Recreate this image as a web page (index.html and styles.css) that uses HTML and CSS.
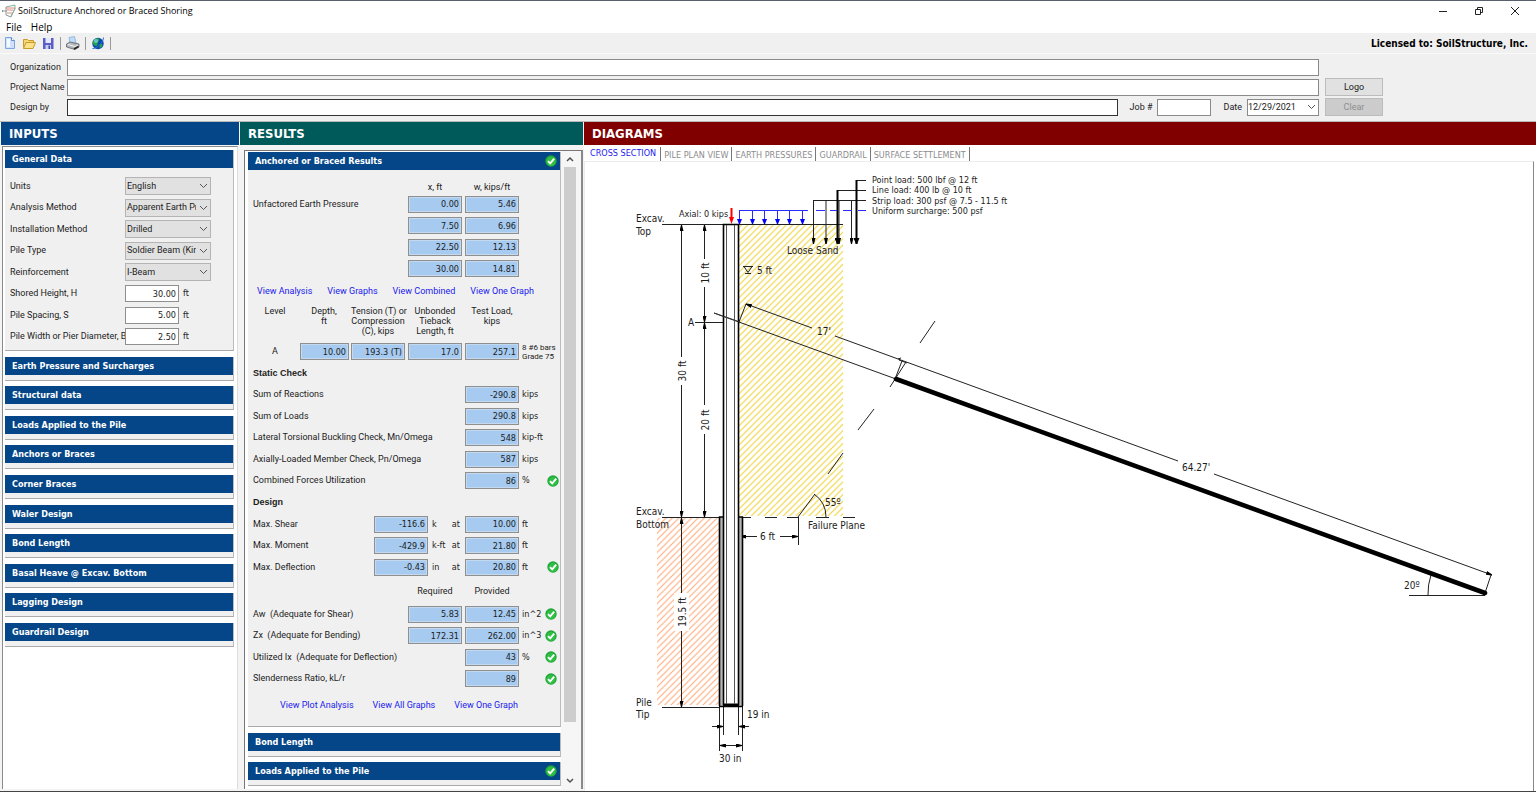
FILE: index.html
```html
<!DOCTYPE html>
<html lang="en">
<head>
<meta charset="utf-8">
<title>SoilStructure Anchored or Braced Shoring</title>
<link rel="stylesheet" href="styles.css">
</head>
<body>
<svg class="defs" width="0" height="0" aria-hidden="true">
  <symbol id="ok" viewBox="0 0 12 12"><circle cx="6" cy="6" r="5.7" fill="#22a53a"/><circle cx="6" cy="6.4" r="4.6" fill="#2fbf45"/><path d="M3 6.2 5.2 8.4 9.2 3.6" fill="none" stroke="#fff" stroke-width="1.9"/></symbol>
</svg>
<div class="window">
  <header class="titlebar">
    <svg class="app-icon" viewBox="0 0 14 14"><path d="M0 7h5M1 6 0 7l1 1M4 3v8l5 2 4-9" fill="none" stroke="#8a9a94"/><path d="M4 3 13 1v4L9 12" fill="none" stroke="#7fb59a"/><path d="M4 4h9M5 6h6M5 9h5" stroke="#e08a80" fill="none"/></svg>
    <span class="title">SoilStructure Anchored or Braced Shoring</span>
    <div class="winbtns">
      <button aria-label="Minimize"><svg viewBox="0 0 10 10"><path d="M1 5.5h8" stroke="#222" fill="none"/></svg></button>
      <button aria-label="Restore"><svg viewBox="0 0 10 10"><path d="M1.5 3.5h5v5h-5zM3.5 3V1.500h5v5H7" stroke="#222" fill="none"/></svg></button>
      <button aria-label="Close"><svg viewBox="0 0 10 10"><path d="M1 1l8 8M9 1 1 9" stroke="#222" fill="none"/></svg></button>
    </div>
  </header>
  <nav class="menubar"><button>File</button><button>Help</button></nav>
  <div class="toolbar">
    <button aria-label="New"><svg viewBox="0 0 14 14"><path d="M2.500 1.500h6l3 3v8h-9z" fill="#cfe2fa" stroke="#7fa6dc"/><path d="M4 3h3v8H4z" fill="#f4f9ff"/><path d="M8.500 1.500v3h3" fill="#fff" stroke="#5f8bcf"/></svg></button>
    <button aria-label="Open"><svg viewBox="0 0 14 14"><path d="M1.500 11.500v-8h4l1 1h5v2" fill="#f3d774" stroke="#c79a2a"/><path d="M1.500 12.500 4 6.500h9.500l-2.500 6z" fill="#fbe28a" stroke="#c79a2a"/></svg></button>
    <button aria-label="Save"><svg viewBox="0 0 14 14"><path d="M2 2h10.500v11H2z" fill="#5a5ec8"/><path d="M4.500 2h5.500v5H4.500z" fill="#e6e9fb"/><path d="M4.500 9h5.500v4H4.500z" fill="#c8ccf0"/><path d="M7.500 9.500H9V13H7.500z" fill="#3f43a0"/></svg></button>
    <i class="sep"></i>
    <button aria-label="Print"><svg viewBox="0 0 14 14"><path d="M4 7 3 1.500 8.500.5 10 7z" fill="#bcdcfb" stroke="#8aa5c4" stroke-width=".7"/><path d="M.5 8 4 6l9 2v3l-4 2.500L.5 11z" fill="#b4b7bb" stroke="#5d6167" stroke-width=".8"/><path d="M2 8.500l7 2 3-1.500" fill="none" stroke="#f4f4f4"/><path d="M8 13l4.500-2.500" stroke="#222" stroke-width="1.500"/></svg></button>
    <i class="sep"></i>
    <button aria-label="Web"><svg viewBox="0 0 14 14"><circle cx="7" cy="7.500" r="5.700" fill="#0e49b0"/><path d="M4 3c2.500-1.500 5-.5 4 1.500S6 7 6.500 8.500 4 10.500 2.500 8.500 2 5 4 3zM9 8c2-.5 3 .5 2 2.500s-2.500 1.500-2.500.2z" fill="#25a844"/><circle cx="5" cy="5" r="2" fill="#7fd6f2" opacity=".7"/><path d="M1.500 12.500C5 13 12.500 7 12.500 1.500" stroke="#2a6fd0" stroke-width="1" fill="none"/></svg></button>
    <i class="sep"></i>
    <strong class="license">Licensed to: SoilStructure, Inc.</strong>
  </div>
  <form class="project">
    <label for="org">Organization</label><input id="org" class="box">
    <label for="pname" class="c1">Project Name</label><input id="pname" class="box"><button type="button" class="btn">Logo</button>
    <label for="by" class="c1">Design by</label>
    <div class="line">
      <input id="by" class="box focus">
      <label for="job">Job #</label><input id="job" class="box job">
      <label for="date">Date</label><select id="date" class="box date"><option>12/29/2021</option></select>
    </div>
    <button type="button" class="btn off" disabled>Clear</button>
  </form>
  <main class="columns">
    <section class="col inputs">
      <h1 class="head blue">INPUTS</h1>
      <div class="pane">
        <div class="card">
          <h2>General Data</h2>
          <div class="general">
            <div class="field"><label for="u">Units</label><select id="u"><option>English</option></select></div>
            <div class="field"><label for="am">Analysis Method</label><select id="am"><option>Apparent Earth Pressure</option></select></div>
            <div class="field"><label for="im">Installation Method</label><select id="im"><option>Drilled</option></select></div>
            <div class="field"><label for="pt">Pile Type</label><select id="pt"><option>Soldier Beam (King Pile)</option></select></div>
            <div class="field"><label for="rf">Reinforcement</label><select id="rf"><option>I-Beam</option></select></div>
            <div class="field"><label for="sh">Shored Height, H</label><input id="sh" class="num" value="30.00"><span>ft</span></div>
            <div class="field"><label for="ps">Pile Spacing, S</label><input id="ps" class="num" value="5.00"><span>ft</span></div>
            <div class="field"><label for="pw">Pile Width or Pier Diameter, B</label><input id="pw" class="num" value="2.50"><span>ft</span></div>
          </div>
        </div>
        <div class="card shut"><h2>Earth Pressure and Surcharges</h2></div>
        <div class="card shut"><h2>Structural data</h2></div>
        <div class="card shut"><h2>Loads Applied to the Pile</h2></div>
        <div class="card shut"><h2>Anchors or Braces</h2></div>
        <div class="card shut"><h2>Corner Braces</h2></div>
        <div class="card shut"><h2>Waler Design</h2></div>
        <div class="card shut"><h2>Bond Length</h2></div>
        <div class="card shut"><h2>Basal Heave @ Excav. Bottom</h2></div>
        <div class="card shut"><h2>Lagging Design</h2></div>
        <div class="card shut"><h2>Guardrail Design</h2></div>
      </div>
    </section>

    <section class="col results">
      <h1 class="head green">RESULTS</h1>
      <div class="pane">
        <div class="list">
          <div class="card">
            <h2>Anchored or Braced Results<svg class="ok"><use href="#ok"/></svg></h2>
            <div class="body">
              <table class="pressure">
                <tr class="cap"><td></td><th>x, ft</th><th>w, kips/ft</th></tr>
                <tr><th class="name">Unfactored Earth Pressure</th><td><input class="val" readonly aria-label="x 1" value="0.00"></td><td><input class="val" readonly aria-label="w 1" value="5.46"></td></tr>
                <tr><th></th><td><input class="val" readonly aria-label="x 2" value="7.50"></td><td><input class="val" readonly aria-label="w 2" value="6.96"></td></tr>
                <tr><th></th><td><input class="val" readonly aria-label="x 3" value="22.50"></td><td><input class="val" readonly aria-label="w 3" value="12.13"></td></tr>
                <tr><th></th><td><input class="val" readonly aria-label="x 4" value="30.00"></td><td><input class="val" readonly aria-label="w 4" value="14.81"></td></tr>
              </table>
              <div class="links"><a href="#">View Analysis</a><a href="#">View Graphs</a><a href="#">View Combined</a><a href="#">View One Graph</a></div>
              <table class="ties">
                <tr><th>Level</th><th>Depth,<br>ft</th><th>Tension (T) or<br>Compression<br>(C), kips</th><th>Unbonded<br>Tieback<br>Length, ft</th><th>Test Load,<br>kips</th><td></td></tr>
                <tr class="vals"><td>A</td><td><input class="val" readonly aria-label="Depth" value="10.00"></td><td><input class="val" readonly aria-label="Tension" value="193.3 (T)"></td><td><input class="val" readonly aria-label="Unbonded length" value="17.0"></td><td><input class="val" readonly aria-label="Test load" value="257.1"></td><td class="note">8 #6 bars<br>Grade 75</td></tr>
              </table>
              <h3>Static Check</h3>
              <div class="row"><label for="r1">Sum of Reactions</label><input id="r1" class="val" readonly value="-290.8"><span class="tail">kips</span></div>
              <div class="row"><label for="r2">Sum of Loads</label><input id="r2" class="val" readonly value="290.8"><span class="tail">kips</span></div>
              <div class="row"><label for="r3">Lateral Torsional Buckling Check, Mn/Omega</label><input id="r3" class="val" readonly value="548"><span class="tail">kip-ft</span></div>
              <div class="row"><label for="r4">Axially-Loaded Member Check, Pn/Omega</label><input id="r4" class="val" readonly value="587"><span class="tail">kips</span></div>
              <div class="row"><label for="r5">Combined Forces Utilization</label><input id="r5" class="val" readonly value="86"><span class="tail far">%<svg class="ok"><use href="#ok"/></svg></span></div>
              <h3>Design</h3>
              <div class="row"><label for="d1">Max. Shear</label><input id="d1" class="val" readonly value="-116.6"><span class="mid"><span>k</span><span>at</span></span><input class="val" readonly aria-label="Shear depth" value="10.00"><span class="tail">ft</span></div>
              <div class="row"><label for="d2">Max. Moment</label><input id="d2" class="val" readonly value="-429.9"><span class="mid"><span>k-ft</span><span>at</span></span><input class="val" readonly aria-label="Moment depth" value="21.80"><span class="tail">ft</span></div>
              <div class="row"><label for="d3">Max. Deflection</label><input id="d3" class="val" readonly value="-0.43"><span class="mid"><span>in</span><span>at</span></span><input class="val" readonly aria-label="Deflection depth" value="20.80"><span class="tail far">ft<svg class="ok"><use href="#ok"/></svg></span></div>
              <div class="row reqhead"><span class="fill"></span><span class="cell">Required</span><i class="gap"></i><span class="cell">Provided</span><span class="tail"></span></div>
              <div class="row"><label for="q1">Aw&nbsp; (Adequate for Shear)</label><input id="q1" class="val" readonly value="5.83"><i class="gap"></i><input class="val" readonly aria-label="Aw provided" value="12.45"><span class="tail">in^2<svg class="ok"><use href="#ok"/></svg></span></div>
              <div class="row"><label for="q2">Zx&nbsp; (Adequate for Bending)</label><input id="q2" class="val" readonly value="172.31"><i class="gap"></i><input class="val" readonly aria-label="Zx provided" value="262.00"><span class="tail">in^3<svg class="ok"><use href="#ok"/></svg></span></div>
              <div class="row"><label for="q3">Utilized Ix&nbsp; (Adequate for Deflection)</label><input id="q3" class="val" readonly value="43"><span class="tail">%<svg class="ok"><use href="#ok"/></svg></span></div>
              <div class="row"><label for="q4">Slenderness Ratio, kL/r</label><input id="q4" class="val" readonly value="89"><span class="tail"><svg class="ok"><use href="#ok"/></svg></span></div>
              <div class="links last"><a href="#">View Plot Analysis</a><a href="#">View All Graphs</a><a href="#">View One Graph</a></div>
            </div>
          </div>
          <div class="card shut"><h2>Bond Length</h2></div>
          <div class="card shut"><h2>Loads Applied to the Pile<svg class="ok"><use href="#ok"/></svg></h2></div>
        </div>
        <div class="scroll" aria-hidden="true">
          <svg viewBox="0 0 12 14"><path d="M3 9l3-3 3 3" fill="none" stroke="#505050" stroke-width="1.500"/></svg>
          <div class="thumb"></div>
          <svg viewBox="0 0 12 14"><path d="M3 5l3 3 3-3" fill="none" stroke="#505050" stroke-width="1.500"/></svg>
        </div>
      </div>
    </section>

    <section class="col diagrams">
      <h1 class="head red">DIAGRAMS</h1>
      <div class="tabs"><button class="on">CROSS SECTION</button><button>PILE PLAN VIEW</button><button>EARTH PRESSURES</button><button>GUARDRAIL</button><button>SURFACE SETTLEMENT</button></div>
      <div class="canvas">
        <svg class="drawing" viewBox="585 162 948 626">
          <defs>
            <pattern id="sand" width="6.400" height="6.400" patternUnits="userSpaceOnUse"><path d="M-1 7.400 7.400-1M-1 1 1-1M5.400 7.400l2-2" stroke="#efd235" stroke-width="1.100"/></pattern>
            <pattern id="clay" width="6.400" height="6.400" patternUnits="userSpaceOnUse"><path d="M-1 7.400 7.400-1M-1 1 1-1M5.400 7.400l2-2" stroke="#ffa573" stroke-width="1"/></pattern>
            <marker id="ar" viewBox="0 0 6 4" refX="6" refY="2" markerWidth="6" markerHeight="4" markerUnits="userSpaceOnUse" orient="auto-start-reverse"><path d="M0 0 6 1.500v1L0 4z"/></marker>
            <marker id="bl" viewBox="0 0 5 5" refX="5" refY="2.500" markerWidth="5" markerHeight="5" markerUnits="userSpaceOnUse" orient="auto"><path d="M0 0 5 2v1L0 5z" fill="#00f"/></marker>
            <marker id="ld" viewBox="0 0 6 6" refX="6" refY="3" markerWidth="6" markerHeight="6" markerUnits="userSpaceOnUse" orient="auto"><path d="M0 0 6 2.500v1L0 6z"/></marker>
          </defs>
          <rect x="739" y="225" width="104" height="291" fill="url(#sand)"/>
          <rect x="657" y="518" width="62" height="187" fill="url(#clay)"/>
          <rect x="674" y="593" width="15" height="38" fill="#fff"/>
          <g class="ln">
            <path d="M662 224.500H843M662 517.500h57M662 707.500h58M695 322.500h28"/>
            <path d="M743 517.500h8M765 517.500h12M787 517.500h11M816 517.500h13M843 517.500h12M798.500 517v28"/>
            <path d="M719.500 707v44M742.500 707v44M723.500 707v28M738.500 707v28"/>
            <path d="M798 517 815 494M828 474 843 453M858 430 874 409M890 387 906 362M920 343 935 321"/>
            <path d="M798 517m28 0A28 28 0 0 0 814 494M1428 595A57 57 0 0 1 1431 575M1409 595.500h76"/>
            <path d="M714 313 896 379M739 322 746 304M895 379 902 361M899 360l8 3M898 359l3-1M1485 593 1491 575"/>
            <path d="M743 266.500h10M744 266.500l4 6 4-6M745 273.500h6"/>
          </g>
          <g class="ln">
            <path marker-start="url(#ar)" d="M681.500 225V357"/><path marker-end="url(#ar)" d="M681.500 385V517"/>
            <path marker-start="url(#ar)" d="M704.500 225V259"/><path marker-end="url(#ar)" d="M704.500 287V322"/>
            <path marker-start="url(#ar)" d="M704.500 323V405"/><path marker-end="url(#ar)" d="M704.500 434V517"/>
            <path marker-start="url(#ar)" d="M681.500 518V593"/><path marker-end="url(#ar)" d="M681.500 631V707"/>
            <path marker-start="url(#ar)" d="M740 536.500h17"/><path marker-end="url(#ar)" d="M780 536.500h18"/>
            <path marker-end="url(#ar)" d="M712 726.500h11"/><path marker-end="url(#ar)" d="M749 726.500h-10"/>
            <path marker-start="url(#ar)" marker-end="url(#ar)" d="M720 745.500h22"/>
            <path marker-start="url(#ar)" d="M746 304 812 328"/><path d="M835 336 1178 461"/><path marker-end="url(#ar)" d="M1214 474 1492 575"/>
          </g>
          <path d="M896 379 1485 593" stroke="#000" stroke-width="4.600" stroke-linecap="round"/>
          <g fill="#b5b5b5"><path d="M719 517h5v189h-5zM738 517h5v189h-5z"/></g>
          <g fill="none" stroke="#000" stroke-width="1.600"><path d="M723.500 705V224.500h15V705M719.500 516.500V706M742.500 516.500V706M719 517h5M738 517h5M719 706.500h24"/></g>
          <path d="M723 705h16" stroke="#000" stroke-width="3"/>
          <path d="M726.500 225V704M734.500 225V704" stroke="#555"/>
          <path d="M714 313 740 322" stroke="#333" stroke-width=".9"/>
          <g class="ln">
            <path d="M866 180.500H856M866 190.500H837M866 200.500H813"/>
            <path marker-end="url(#ar)" d="M813.500 200V244"/><path marker-end="url(#ar)" d="M826 200V244"/><path marker-end="url(#ar)" d="M839 200V244"/><path marker-end="url(#ar)" d="M851.500 200V244"/>
            <path marker-end="url(#ld)" class="bold" d="M837.500 190V244"/><path marker-end="url(#ld)" class="bold" d="M856.500 180V244"/>
          </g>
          <g stroke="#2b2bff" fill="none"><path d="M739 210.500h69M816 210.500h9M830 210.500h7M843 210.500h9M858 210.500h8"/><path marker-end="url(#bl)" d="M739.500 210v14"/><path marker-end="url(#bl)" d="M752.500 210v14"/><path marker-end="url(#bl)" d="M764.500 210v14"/><path marker-end="url(#bl)" d="M777.500 210v14"/><path marker-end="url(#bl)" d="M789.500 210v14"/><path marker-end="url(#bl)" d="M802.500 210v14"/></g>
          <path d="M731.500 208v10" stroke="#f00" stroke-width="2"/><path d="M729 217h5l-2.500 7z" fill="#f00"/>
          <g class="t9"><text x="872" y="183">Point load: 500 lbf @ 12 ft</text><text x="872" y="193">Line load: 400 lb @ 10 ft</text><text x="872" y="204">Strip load: 300 psf @ 7.5 - 11.5 ft</text><text x="872" y="214">Uniform surcharge: 500 psf</text><text x="679" y="217">Axial: 0 kips</text></g>
          <g class="t10">
            <text x="636" y="222">Excav.</text><text x="636" y="235">Top</text><text x="787" y="254">Loose Sand</text><text x="757" y="274">5 ft</text>
            <text x="688" y="326">A</text><text x="817" y="335">17'</text><text x="1182" y="471">64.27'</text><text x="1404" y="589">20º</text><text x="825" y="506">55º</text>
            <text x="636" y="515">Excav.</text><text x="636" y="528">Bottom</text><text x="808" y="529">Failure Plane</text><text x="760" y="540">6 ft</text>
            <text x="636" y="706">Pile</text><text x="636" y="718">Tip</text><text x="747" y="718">19 in</text><text x="719" y="762">30 in</text>
            <g text-anchor="middle"><text transform="translate(686 371) rotate(-90)">30 ft</text><text transform="translate(709 273) rotate(-90)">10 ft</text><text transform="translate(709 420) rotate(-90)">20 ft</text><text transform="translate(686 612) rotate(-90)">19.5 ft</text></g>
          </g>
        </svg>
      </div>
    </section>
  </main>
</div>
</body>
</html>
```
FILE: styles.css
```css
* { box-sizing: border-box; }
html, body { height: 100%; }
body { margin: 0; background: #fff; color: #1c1c1c; font: 9px/11px Roboto, "Liberation Sans", sans-serif; }
.defs { position: absolute; }
button, input, select { font: inherit; color: inherit; margin: 0; }
button { background: none; border: 0; padding: 0; }
h1, h2, h3 { margin: 0; }

.window { min-height: 100vh; display: flex; flex-direction: column; border-top: 1px solid #5b5e6b; border-bottom: 1px solid #444; }
.titlebar { display: flex; align-items: center; height: 19px; padding-left: 2px; background: #fff; }
.app-icon { width: 14px; height: 14px; }
.title { flex: 1; margin-left: 2px; font: 9px/12px "Open Sans", sans-serif; color: #000; }
.winbtns { display: flex; padding-right: 3px; }
.winbtns button { width: 36px; height: 18px; display: grid; place-items: center; }
.winbtns svg { width: 10px; height: 10px; }
.menubar { display: flex; gap: 9px; height: 13px; padding-left: 6px; font: 10px/14px "Open Sans", sans-serif; color: #000; }
.toolbar { display: flex; align-items: center; height: 21px; padding: 0 8px 0 3px; background: #f0f0f0; border-bottom: 1px solid #fafafa; }
.toolbar button { width: 14px; height: 14px; margin-right: 5px; }
.toolbar svg { display: block; width: 14px; height: 14px; }
.sep { width: 1px; height: 13px; margin-right: 5px; background: #9a9a9a; }
.license { margin-left: auto; font: bold 10px/13px "DejaVu Sans Condensed", sans-serif; color: #000; }

.project { display: grid; grid-template-columns: 57px 1fr 58px; grid-auto-rows: 18px; column-gap: 6px; row-gap: 2px; align-items: center; padding: 4px 153px 5px 10px; background: #f0f0f0; border-bottom: 1px solid #b8b8b8; }
.project > label { grid-column: 1; margin-right: -6px; }
.project > .box, .line { margin-left: -6px; }
.box { height: 17px; padding: 0 3px; border: 1px solid #8a8a8a; border-radius: 0; background-color: #fff; min-width: 0; }
.focus { flex: 1; border-color: #333; }
.line { display: flex; align-items: center; gap: 5px; }
.line label { margin-left: 7px; }
.job { width: 54px; }
.date { width: 72px; padding: 0; }
.btn { height: 18px; background: #e1e1e1; border: 1px solid #bcbcbc; text-align: center; }
.off { background: #ccc; color: #8f8f8f; }
select { appearance: none; background: #e1e1e1 url("data:image/svg+xml,%3Csvg xmlns='http://www.w3.org/2000/svg' width='9' height='6'%3E%3Cpath d='M1 1l3.500 3.500L8 1' fill='none' stroke='%23555'/%3E%3C/svg%3E") no-repeat right 2px center; }

.columns { flex: 1; display: grid; grid-template-columns: 239px 343px 1fr; column-gap: 1px; background: #f4f4f4; }
.col { display: flex; flex-direction: column; min-width: 0; }
.head { height: 23px; padding-left: 8px; color: #fff; font: bold 13px/23px "DejaVu Sans Condensed", sans-serif; }
.blue { background: #054688; margin-left: 1px; }
.green { background: #005a5a; }
.red { background: #800000; }
.pane { flex: 1; background: #fff; }
.inputs .pane { margin: 1px 1px 2px 2px; padding: 3px 3px 0 2px; border-left: 1px solid #8a8a8a; border-top: 1px solid #8a8a8a; border-right: 1px solid #ddd; }
.results .pane { display: flex; margin: 5px 0 2px 4px; border-left: 1px solid #777; border-top: 1px solid #777; border-right: 2px solid #8a8a8a; }
.card { background: #f0f0f0; border-right: 1px solid #bbb; border-bottom: 1px solid #aaa; }
.card h2 { display: flex; justify-content: space-between; align-items: center; height: 18px; padding: 0 3px 0 7px; background: #054688; color: #fff; font: bold 9px/18px "DejaVu Sans Condensed", sans-serif; }
.ok { width: 12px; height: 12px; flex: none; }
.shut { height: 24px; margin-top: 6px; }
.shut:nth-child(5n), .shut:nth-child(5n+3) { margin-top: 5px; }
.general { padding: 7px 0 3px 5px; }
.field { display: flex; align-items: center; height: 22px; }
.field:nth-child(even) { height: 21px; }
.field label { width: 115px; white-space: nowrap; }
.field span { margin-left: 4px; }
.field select { width: 86px; height: 18px; padding: 0 14px 0 1px; border: 1px solid #b4b4b4; border-radius: 0; overflow: hidden; }
.num, .val { width: 54px; height: 17px; padding: 0 2px; border: 1px solid #8f8f8f; border-radius: 0; text-align: right; background: #fff; }
.num, .val, .tail, .mid, .field span { font-family: "DejaVu Sans Condensed", sans-serif; }

.list { flex: 1; padding: 1px 0 0 3px; min-width: 0; }
.body { padding: 12px 0 5px 5px; }
.val { display: block; background: #a6caf0; box-shadow: inset 0 0 0 1px #c3d9f0; }
table { border-collapse: collapse; table-layout: fixed; }
th, td { padding: 0; font-weight: normal; white-space: nowrap; }
.pressure { width: 269px; }
.pressure th:nth-child(2), .pressure th:nth-child(3), .pressure td:nth-child(n+2) { width: 57px; }
.pressure .name { text-align: left; }
.pressure tr { height: 22px; }
.pressure tr:nth-child(odd) { height: 21px; }
.pressure tr.cap { height: 11px; }
.pressure .cap th { padding-right: 3px; }
.links { display: flex; gap: 15px; height: 24px; align-items: center; padding-left: 4px; }
a { color: #1a1aee; text-decoration: none; }
.ties { width: 306px; }
.ties th { height: 38px; padding: 3px 3px 0 0; line-height: 10px; vertical-align: top; text-align: center; }
.ties th:nth-child(1) { width: 47px; }
.ties th:nth-child(2) { width: 51px; }
.ties th:nth-child(3), .ties th:nth-child(4), .ties th:nth-child(5) { width: 57px; }
.ties .vals { height: 21px; }
.ties td:first-child { padding-right: 3px; text-align: center; }
.ties td:nth-child(2) .val { width: 49px; }
.ties .note { font-size: 8px; line-height: 9px; }
h3 { height: 22px; font: bold 9px/22px "Liberation Sans", sans-serif; }
.row { display: flex; align-items: center; height: 22px; }
.row:nth-of-type(even) { height: 21px; }
.row label, .fill { flex: 1; white-space: nowrap; }
.mid { width: 37px; display: flex; justify-content: space-between; padding: 0 5px 0 4px; }
.tail { width: 41px; padding: 0 3px; display: flex; justify-content: space-between; align-items: center; }
.far { padding-right: 1px; }
.tail > .ok:only-child { margin-left: auto; }
.gap { width: 3px; }
.cell { width: 54px; text-align: center; }
.row.reqhead { padding-top: 2px; height: 25px; }
.last { height: 32px; gap: 19px; padding-left: 27px; }
.scroll { width: 20px; padding: 0 5px 0 3px; display: flex; flex-direction: column; background: #f6f6f6; }
.scroll svg { width: 12px; height: 16px; flex: none; }
.thumb { background: #cdcdcd; flex: 0 0 87%; }
.scroll svg:last-child { margin-top: auto; }

.diagrams { background: #fff; }
.tabs { display: flex; height: 16px; padding-top: 2px; }
.tabs button { height: 14px; padding: 2px 3px 0 3px; border-right: 1px solid #777; color: #8c8c8c; font: 9px/12px "DejaVu Sans Condensed", sans-serif; white-space: nowrap; }
.tabs .on { padding: 0 4px 2px 6px; color: #1a1aee; }
.canvas { flex: 1; margin-right: 2px; border-top: 1px solid #ececec; border-left: 1px solid #ececec; border-right: 1px solid #888; }
.drawing { display: block; width: 100%; height: auto; }
.drawing text { fill: #1c1c1c; }
.ln { fill: none; stroke: #222; stroke-width: 1; }
.bold { stroke-width: 2; stroke: #000; }
.t9 { font: 9px "DejaVu Sans Condensed", sans-serif; }
.t10 { font: 10px "DejaVu Sans Condensed", sans-serif; }
```
